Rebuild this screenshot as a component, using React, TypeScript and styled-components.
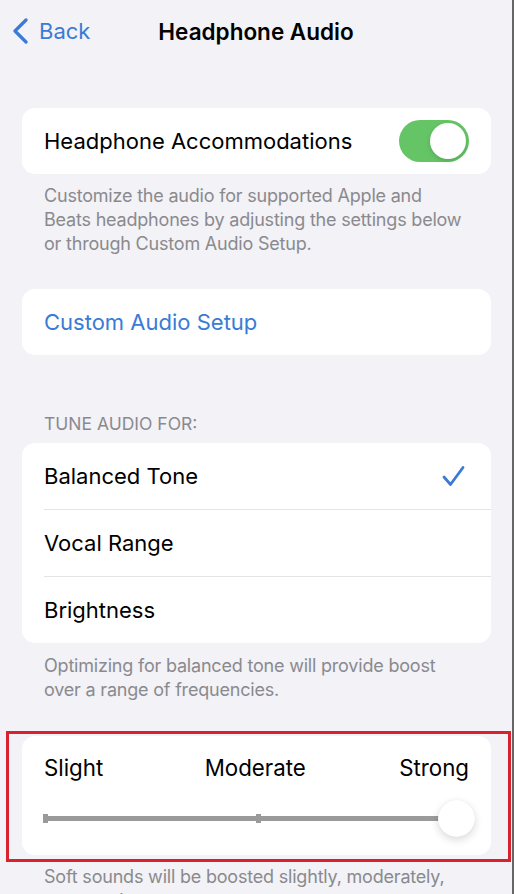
import React from 'react';
import styled, { createGlobalStyle } from 'styled-components';

const BLUE = '#3a7bd5';
const GREY_TEXT = '#8a8a8e';

const GlobalStyle = createGlobalStyle`
  html, body {
    margin: 0;
    padding: 0;
    background: #f2f2f7;
  }
  body {
    font-family: Inter, "Noto Sans", sans-serif;
    -webkit-font-smoothing: antialiased;
  }
  * {
    box-sizing: border-box;
  }
`;

export default function App() {
  return (
    <>
      <GlobalStyle />
      <Page>
        <NavBar>
          <BackButton>
            <svg width="17" height="26" viewBox="0 0 17 26" fill="none">
              <polyline
                points="14,2 3,13 14,24"
                stroke={BLUE}
                strokeWidth="3.2"
                strokeLinecap="round"
                strokeLinejoin="round"
              />
            </svg>
            <span>Back</span>
          </BackButton>
          <Title>Headphone Audio</Title>
          <div />
        </NavBar>

        <Content>
          <Card $top={46}>
            <Row>
              <Label>Headphone Accommodations</Label>
              <Toggle>
                <ToggleKnob />
              </Toggle>
            </Row>
          </Card>
          <Footer $top={10}>
            Customize the audio for supported Apple and
            <br />
            Beats headphones by adjusting the settings below
            <br />
            or through Custom Audio Setup.
          </Footer>

          <Card $top={33}>
            <Row>
              <Label $blue>Custom Audio Setup</Label>
            </Row>
          </Card>

          <SectionHeader>TUNE AUDIO FOR:</SectionHeader>
          <Card $top={9}>
            <Row>
              <Label>Balanced Tone</Label>
              <svg width="24" height="24" viewBox="0 0 24 24" fill="none" style={{ marginRight: 4 }}>
                <polyline
                  points="3,13 9.5,20.5 22,3.5"
                  stroke={BLUE}
                  strokeWidth="2.8"
                  strokeLinecap="round"
                  strokeLinejoin="round"
                />
              </svg>
            </Row>
            <Row $divider>
              <Label>Vocal Range</Label>
            </Row>
            <Row $divider>
              <Label>Brightness</Label>
            </Row>
          </Card>
          <Footer $top={11}>
            Optimizing for balanced tone will provide boost
            <br />
            over a range of frequencies.
          </Footer>
        </Content>

        <Highlight>
          <SliderCard>
            <LevelLabels>
              <span>Slight</span>
              <span>Moderate</span>
              <span>Strong</span>
            </LevelLabels>
            <Track>
              <Tick style={{ left: 0 }} />
              <Tick style={{ left: '50%' }} />
              <Knob />
            </Track>
          </SliderCard>
        </Highlight>

        <Content>
          <Footer $top={3}>
            Soft sounds will be boosted slightly, moderately,
            <br />
            or strongly.
          </Footer>
        </Content>
      </Page>
    </>
  );
}

const Page = styled.div`
  width: 514px;
  height: 894px;
  overflow: hidden;
  border-right: 2px solid #666;
  background: #f2f2f7;
`;

const NavBar = styled.div`
  height: 62px;
  display: grid;
  grid-template-columns: 1fr auto 1fr;
  align-items: center;
`;

const BackButton = styled.div`
  display: flex;
  align-items: center;
  gap: 10px;
  padding-left: 12px;
  color: ${BLUE};
  font-size: 22px;
`;

const Title = styled.div`
  font-size: 22.5px;
  font-weight: 600;
  color: #000;
`;

const Content = styled.div`
  padding: 0 21px 0 22px;
`;

const Card = styled.div<{ $top: number }>`
  margin-top: ${(p) => p.$top}px;
  background: #fff;
  border-radius: 13px;
  overflow: hidden;
`;

const Row = styled.div<{ $divider?: boolean }>`
  height: ${(p) => (p.$divider ? 67 : 66)}px;
  padding: 0 22px;
  display: flex;
  align-items: center;
  justify-content: space-between;
  border-top: ${(p) => (p.$divider ? '1px solid #e3e3e8' : 'none')};
  margin-left: ${(p) => (p.$divider ? '22px' : '0')};
  padding-left: ${(p) => (p.$divider ? '0' : '22px')};
`;

const Label = styled.div<{ $blue?: boolean }>`
  font-size: 22px;
  color: ${(p) => (p.$blue ? BLUE : '#000')};
`;

const Toggle = styled.div`
  width: 70px;
  height: 42px;
  border-radius: 21px;
  background: #65c466;
  display: flex;
  align-items: center;
  justify-content: flex-end;
  padding: 3px;
`;

const ToggleKnob = styled.div`
  width: 36px;
  height: 36px;
  border-radius: 50%;
  background: #fff;
  box-shadow: 0 2px 4px rgba(0, 0, 0, 0.15);
`;

const Footer = styled.div<{ $top: number }>`
  margin-top: ${(p) => p.$top}px;
  padding: 0 0 0 22px;
  font-size: 18px;
  line-height: 24px;
  letter-spacing: -0.2px;
  white-space: nowrap;
  color: ${GREY_TEXT};
`;

const SectionHeader = styled.div`
  margin-top: 59px;
  padding: 0 22px;
  font-size: 17.5px;
  line-height: 20px;
  color: ${GREY_TEXT};
`;

const Highlight = styled.div`
  margin: 29px 1px 0 6px;
  border: 3px solid #d9222f;
  padding: 2px 17px 4px 13px;
`;

const SliderCard = styled.div`
  background: #fff;
  border-radius: 13px;
  height: 119px;
  padding: 16px 22px 0;
`;

const LevelLabels = styled.div`
  display: flex;
  justify-content: space-between;
  font-size: 22.3px;
  color: #000;
  line-height: 32px;
  span:nth-child(2) {
    margin-left: 8px;
  }
`;

const Track = styled.div`
  position: relative;
  margin-top: 32px;
  height: 5px;
  background: #9a9a9a;
`;

const Tick = styled.div`
  position: absolute;
  top: -2px;
  width: 5px;
  height: 9px;
  margin-left: -1px;
  background: #9a9a9a;
`;

const Knob = styled.div`
  position: absolute;
  top: 50%;
  right: -6px;
  width: 37px;
  height: 37px;
  margin-top: -18.5px;
  border-radius: 50%;
  background: #fff;
  box-shadow: 0 3px 8px rgba(0, 0, 0, 0.15), 0 0 1px rgba(0, 0, 0, 0.1);
`;
